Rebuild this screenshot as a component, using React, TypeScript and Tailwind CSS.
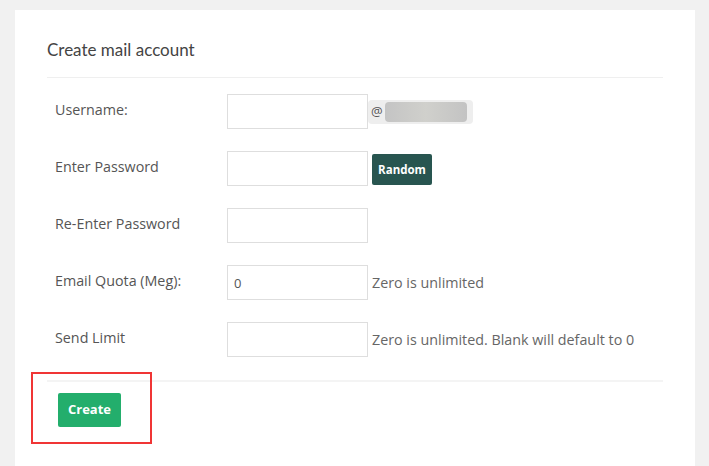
import React from "react";

const labelCls = "w-[172px] shrink-0 text-[14.3px] text-[#555] -mt-[3px]";
const inputCls = "w-[141px] h-[35px] border border-[#dedede] bg-white px-[6px] text-[13px] text-[#555] outline-none";

function Row({ label, children, value }: { label: string; children?: React.ReactNode; value?: string }) {
    return (
        <div className="flex items-center pl-2">
            <div className={labelCls}>{label}</div>
            <input className={inputCls} defaultValue={value} />
            {children}
        </div>
    );
}

export default function App() {
    return (
        <div className="w-[709px] h-[466px] bg-[#f1f1f1] pt-[10px] pl-[15px] pr-[14px] overflow-hidden" style={{ fontFamily: '"Open Sans", "Liberation Sans", sans-serif' }}>
            <div className="relative bg-white h-[456px] px-8">
                <div className="pt-[28px] pb-[16px] border-b border-[#efefef]">
                    <h1 className="text-[17px] leading-[23px] text-[#444]" style={{ fontFamily: 'Lato, "Open Sans", sans-serif' }}>
                        Create mail account
                    </h1>
                </div>

                <div className="flex flex-col gap-[22px] pt-[16px] pb-[23px] border-b-2 border-[#f4f4f4]">
                    <Row label="Username:">
                        <div className="flex items-center h-[24px] w-[105px] bg-[#eeeeee] rounded-sm">
                            <span className="text-[13px] text-[#555] pl-[3px]">@</span>
                            <div className="ml-[2px] h-[20px] w-[82px] rounded-[4px] bg-gradient-to-r from-[#c4c4c4] via-[#d0d0cc] to-[#c3c3c3]" />
                        </div>
                    </Row>
                    <Row label="Enter Password">
                        <button className="ml-1 mt-[2px] w-[60px] h-[31px] rounded-[2px] bg-[#285550] text-white text-[11.5px] font-bold">
                            Random
                        </button>
                    </Row>
                    <Row label="Re-Enter Password" />
                    <Row label="Email Quota (Meg):" value="0">
                        <span className="ml-1 text-[14.3px] text-[#666]">Zero is unlimited</span>
                    </Row>
                    <Row label="Send Limit">
                        <span className="ml-1 text-[14.3px] text-[#666]">Zero is unlimited. Blank will default to 0</span>
                    </Row>
                </div>

                <div className="pt-[11px] pl-[11px]">
                    <button className="w-[63px] h-[34px] rounded-[2px] bg-[#23ae6c] text-white text-[13px] font-bold">
                        Create
                    </button>
                </div>

                {/* annotation box */}
                <div className="absolute left-[16px] top-[362px] w-[121px] h-[72px] border-2 border-[#f03535]" />
            </div>
        </div>
    );
}
